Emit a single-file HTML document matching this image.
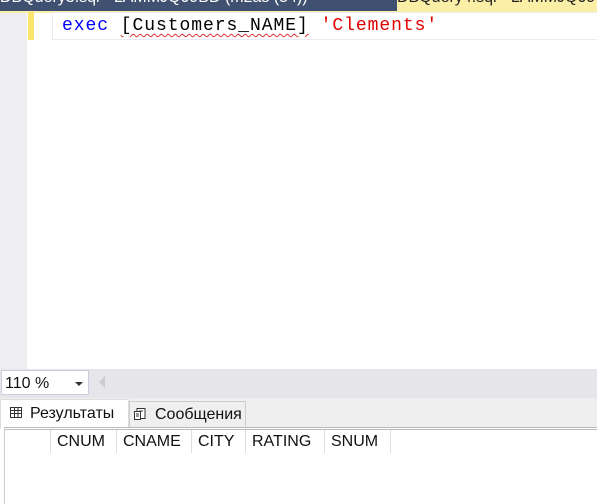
<!DOCTYPE html>
<html><head><meta charset="utf-8"><style>
*{margin:0;padding:0;box-sizing:border-box}
body{width:597px;height:504px;overflow:hidden;background:#fff;position:relative;font-family:"Liberation Sans",sans-serif}
.abs{position:absolute}
</style></head><body>
<div class="abs" style="left:0;top:0;width:597px;height:11px;background:#3f5070"></div>
<div class="abs" style="left:0;top:-11px;width:397px;color:#fff;font-size:16px;white-space:nowrap;overflow:hidden;height:22px">DBQuery3.sql - LAMMJQ09BD (m2as (54))</div>
<div class="abs" style="left:397px;top:0;width:200px;height:11px;background:#fbefa8;overflow:hidden"><div style="margin-top:-11px;font-size:16px;color:#222;white-space:nowrap">DBQuery4.sql - LAMMJQ09</div></div>
<div class="abs" style="left:0;top:11px;width:597px;height:2px;background:#fbefa8"></div>
<div class="abs" style="left:0;top:13px;width:27px;height:356px;background:#eeeef2"></div>
<div class="abs" style="left:28px;top:12px;width:6px;height:28px;background:#fbe66b"></div>
<div class="abs" style="left:52px;top:12px;width:545px;height:28px;border:1px solid #eaeaf0;border-right:none"></div>
<div class="abs" style="left:62px;top:16px;font-family:'Liberation Mono',monospace;font-size:18px;letter-spacing:0.95px;white-space:pre;color:#000"><span style="color:#0000ff">exec</span> <span style="text-decoration:underline wavy #e03030;text-underline-offset:3px;text-decoration-thickness:1px">[Customers_NAME]</span> <span style="color:#e00000">'Clements'</span></div>
<div class="abs" style="left:0;top:369px;width:597px;height:29px;background:#e6e6ea"></div>
<div class="abs" style="left:1px;top:370px;width:88px;height:25px;background:#fff;border:1px solid #ccd;font-size:16px;padding:4px 0 0 3px;color:#111">110 %</div>
<div class="abs" style="left:75px;top:382px;border-left:4px solid transparent;border-right:4px solid transparent;border-top:4px solid #333"></div>
<div class="abs" style="left:99px;top:376px;border-top:6px solid transparent;border-bottom:6px solid transparent;border-right:6px solid #ccc"></div>
<div class="abs" style="left:0;top:398px;width:597px;height:29px;background:#efefef"></div>
<div class="abs" style="left:0;top:399px;width:129px;height:30px;background:#fff;border:1px solid #ddd;border-bottom:none"></div>
<svg class="abs" style="left:10px;top:407px" width="12" height="11"><rect x=".5" y=".5" width="11" height="10" fill="none" stroke="#333"/><path d="M0 3.5H12M0 6.5H12M4.5 0V11M8 0V11" stroke="#333"/></svg>
<div class="abs" style="left:30px;top:405px;font-size:16px;color:#111">Результаты</div>
<div class="abs" style="left:129px;top:401px;width:117px;height:26px;border:1px solid #ccc;border-bottom:none;background:#efefef"></div>
<svg class="abs" style="left:134px;top:408px" width="12" height="12"><rect x="3" y=".5" width="8" height="10" fill="#fff" stroke="#333"/><rect x=".5" y="3.5" width="6" height="8" fill="#fff" stroke="#333"/><path d="M2 6H5M2 8H5M5 3H9" stroke="#333"/></svg>
<div class="abs" style="left:155px;top:406px;font-size:16px;color:#111">Сообщения</div>
<div class="abs" style="left:4px;top:427px;width:593px;height:77px;background:#fff;border-left:1px solid #ccc;border-top:3px double #bbb"></div>
<div class="abs" style="top:430px;left:50px;height:23px;width:341px;border-left:1px solid #ddd;border-right:1px solid #ddd"></div>
<div class="abs" style="top:430px;left:116px;height:23px;border-left:1px solid #ddd"></div>
<div class="abs" style="top:430px;left:191px;height:23px;border-left:1px solid #ddd"></div>
<div class="abs" style="top:430px;left:245px;height:23px;border-left:1px solid #ddd"></div>
<div class="abs" style="top:430px;left:324px;height:23px;border-left:1px solid #ddd"></div>
<div class="abs" style="top:433px;left:57px;font-size:16px;color:#111">CNUM</div>
<div class="abs" style="top:433px;left:123px;font-size:16px;color:#111">CNAME</div>
<div class="abs" style="top:433px;left:198px;font-size:16px;color:#111">CITY</div>
<div class="abs" style="top:433px;left:252px;font-size:16px;color:#111">RATING</div>
<div class="abs" style="top:433px;left:331px;font-size:16px;color:#111">SNUM</div>
</body></html>
